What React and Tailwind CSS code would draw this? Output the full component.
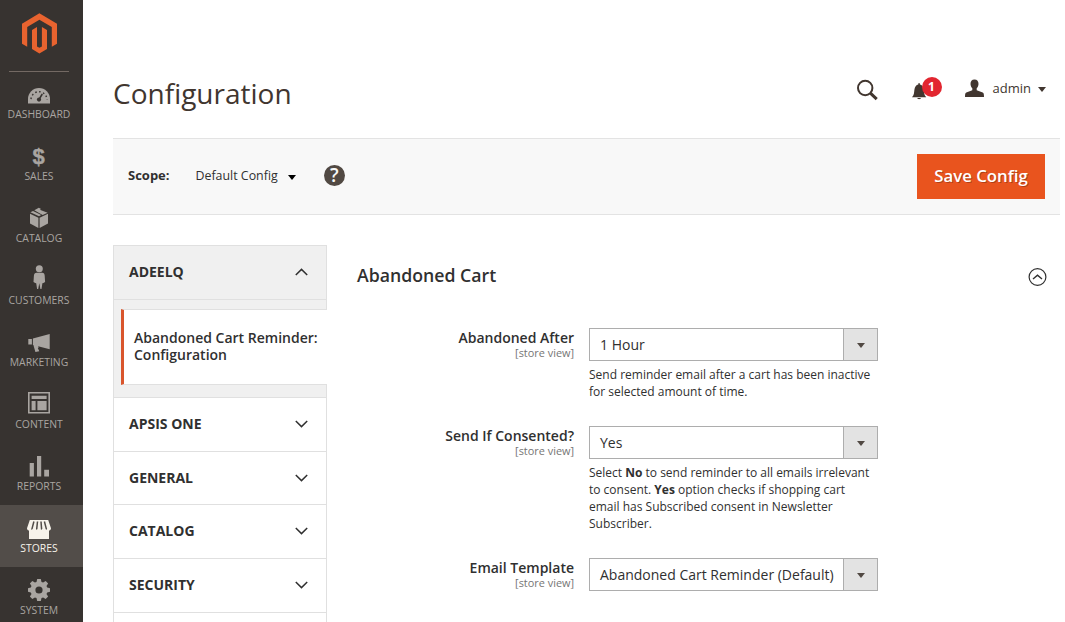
import React from "react";

const icons = {
  dashboard: (
    <>
      <path d="M28 32.6V28a11 11 0 0 1 22 0v4.6z" fill="currentColor" />
      <g stroke="#373330" strokeWidth="1.4" fill="none">
        <path d="M31 28.7a8 8 0 0 1 16 0" strokeDasharray="1.6 2.4" strokeDashoffset="-0.6" />
        <path d="M39 28.5l3.3-5.5" strokeWidth="1.5" />
      </g>
      <circle cx="39" cy="28.6" r="2.1" fill="#373330" />
    </>
  ),
  sales: (
    <text x="38.5" y="30.7" textAnchor="middle" fontSize="22" fontWeight="700" fontFamily="Liberation Sans, sans-serif" fill="currentColor" stroke="currentColor" strokeWidth="0.4">$</text>
  ),
  catalog: (
    <g fill="currentColor">
      <path d="M30 18.8l8.4 4v10.2l-8.4-4.6z" />
      <path d="M48 18.8l-8.4 4v10.2l8.4-4.6z" />
      <path d="M30.4 17.3l2.6-1.4 8.2 4-2.2 1.4z" />
      <path d="M34.3 15.2l4.5-2.4 2.3 1.2-1.3.7 7.8 3-5 2.4z" />
    </g>
  ),
  customers: (
    <g fill="currentColor">
      <circle cx="39.3" cy="11.8" r="3.5" />
      <path d="M36.6 15.8h5.6c1.7 0 2.4 1.2 2.5 3l.4 6.2-1.7 1-1 .2-.9 5.700h-1.100l-1.100-5.700-1.100 5.700h-1.100l-.9-5.700-1-.2-1.700-1 .4-6.200c.1-1.800 1-3 2.700-3z" />
    </g>
  ),
  marketing: (
    <g fill="currentColor">
      <path d="M28.3 20h3.6v5.5h-3.6z" />
      <path d="M32.9 19.5L49.7 15v15.2l-11.6-2.9.6 1.1-.9.6 1.5 3.2-3.9.7-2-6.8h-.5z" />
    </g>
  ),
  content: (
    <g fill="currentColor">
      <path fillRule="evenodd" d="M28 11h22v21.6H28zM29.6 12.6v18.4h18.8V12.6z" />
      <path d="M31.6 14.7h15v3.4h-15zM31.6 20h4v9.2h-4zM37.4 20h9.2v9.2h-9.2z" />
    </g>
  ),
  reports: (
    <path fill="currentColor" d="M29.7 20h4.2v13.6h-4.2zM37 13h4.2v20.6H37zM44.2 26.8h4.8v6.8h-4.8z" />
  ),
  stores: (
    <>
      <path fill="currentColor" d="M29.8 15h18.4l2.8 8.2c0 3-4 3-4.6.7-.7 2.3-4.3 2.3-5 0-.6 2.3-4.2 2.3-4.8 0-.6 2.3-4.3 2.3-5 0-.6 2.3-4.6 2.3-4.6-.7z" />
      <path fill="currentColor" d="M29 25h20v9H29z" />
      <path d="M33.9 16.5l-2 7.6M37.5 16.5l-.8 7.6M41 16.5l.6 7.6M44.4 16.5l2 7.6" stroke="#524d49" strokeWidth="1.5" fill="none" />
    </>
  ),
  system: (
    <g transform="translate(39 23)">
      <path
        fill="currentColor"
        fillRule="evenodd"
        d="M-1.8-11h3.6l.7 2.9 1.6.7 2.6-1.6 2.4 2.4-1.6 2.6.7 1.6 2.8.7v3.4l-2.8.7-.7 1.6 1.6 2.6-2.4 2.4-2.6-1.6-1.6.7-.7 2.9h-3.6l-.7-2.9-1.6-.7-2.6 1.6-2.4-2.4 1.6-2.6-.7-1.6-2.8-.7v-3.4l2.8-.7.7-1.6-1.6-2.6 2.4-2.4 2.6 1.6 1.6-.7zM0-3.6a3.6 3.6 0 1 0 0 7.2 3.6 3.6 0 0 0 0-7.2z"
      />
    </g>
  ),
};

const menu = ["dashboard", "sales", "catalog", "customers", "marketing", "content", "reports", "stores", "system"];

function MenuItem({ name }) {
  const active = name === "stores";
  return (
    <li className={`h-[62px] w-[83px] ${active ? "bg-[#524d49] text-[#f7f3eb]" : "text-[#a9a5a1]"}`}>
      <svg className="block h-[36px] w-[83px]" viewBox="0 0 83 36">{icons[name]}</svg>
      <span className={`block w-[78px] text-center text-[10.4px] leading-[14px] uppercase ${active ? "font-medium" : ""}`}>{name}</span>
    </li>
  );
}

function Caret({ className }) {
  return (
    <svg className={className} viewBox="0 0 8 5">
      <path d="M0 0h8L4 5z" fill="currentColor" />
    </svg>
  );
}

function Chevron({ up }) {
  return (
    <svg className="mr-[18px] block h-[8px] w-[13px]" viewBox="0 0 13 8" fill="none" stroke="#303030" strokeWidth="1.5">
      <path d={up ? "M.8 7l5.7-5.6L12.2 7" : "M.8 1l5.7 5.6L12.2 1"} />
    </svg>
  );
}

function Tab({ label, className }) {
  return (
    <div className={`flex items-center justify-between border-b border-[#e0e0e0] pb-px pl-[15px] ${className}`}>
      <span className="pb-px text-[14px] font-bold">{label}</span>
      <Chevron />
    </div>
  );
}

function Field({ label, value, className, children }) {
  return (
    <div className={`flex ${className}`}>
      <div className="w-[217px] text-right">
        <div className="text-[14px] leading-[19px] font-semibold">{label}</div>
        <div className="text-[10.9px] leading-[11px] text-[#757575]">[store view]</div>
      </div>
      <div className="ml-[15px] w-[289px]">
        <div className="flex h-[33px] border border-[#adadad]">
          <div className="flex flex-1 items-center pl-[10px] text-[14px] whitespace-nowrap">{value}</div>
          <div className="flex w-[34px] items-center justify-center border-l border-[#adadad] bg-[#e3e3e3] pt-px text-[#514943]">
            <Caret className="h-[5px] w-[8px]" />
          </div>
        </div>
        <p className="mt-[5px] text-[12px] leading-[17px] whitespace-nowrap">{children}</p>
      </div>
    </div>
  );
}

export default function App() {
  return (
    <div className="flex h-[622px] w-[1065px] overflow-hidden bg-white font-['Open_Sans',sans-serif] text-[#303030]">
      <nav className="w-[83px] shrink-0 bg-[#373330]">
        <div className="h-[71px]">
          <svg className="block h-[71px] w-[83px]" viewBox="0 0 83 71" fill="#e8632f">
            <path d="M39.4 13.3L57 23.8v19.9l-5.2 3V26.9l-12.4-7.2L27.2 26.9v19.8l-5.2-3V23.8z" />
            <path d="M32 30l5-2.9v19.3l2.4 1.4 2.5-1.4V27.1L47 30v19l-7.6 4.5L32 49z" />
          </svg>
        </div>
        <div className="relative">
          <div className="absolute top-0 left-[9px] h-px w-[60px] bg-[#736963]" />
          <ul>{menu.map((m) => <MenuItem key={m} name={m} />)}</ul>
        </div>
      </nav>

      <div className="ml-[30px] w-[947px] shrink-0">
        <header className="flex h-[138px] justify-between">
          <h1 className="pt-[73px] text-[28px] leading-[40px] text-[#41362f]">Configuration</h1>
          <div className="flex pt-[75px] pr-[14px] text-[#41362f]">
            <svg className="h-[28px] w-[26px]" viewBox="0 0 26 28" fill="none" stroke="currentColor">
              <circle cx="11.2" cy="13" r="7.2" strokeWidth="2" />
              <path d="M16.4 18.2l6.3 6" strokeWidth="3" />
            </svg>
            <div className="relative ml-[31px] h-[28px] w-[34px]">
              <svg className="h-[28px] w-[34px]" viewBox="0 0 34 28" fill="currentColor">
                <path d="M1 22.2c2.3-2.2 2-4.6 2.4-7.4.4-3 1.7-4.7 3.9-5.2V8.2h1.6v1.4c2.2.5 3.5 2.2 3.9 5.2.4 2.8.1 5.2 2.4 7.4z" />
                <path d="M6.3 23h3.6c-.3 1.6-3.3 1.6-3.6 0z" />
              </svg>
              <span className="absolute top-[2px] left-[11px] flex h-[20px] w-[20px] items-center justify-center rounded-full bg-[#e22630] text-[12px] font-bold text-white">1</span>
            </div>
            <svg className="ml-[18px] h-[28px] w-[22px]" viewBox="0 0 22 28" fill="currentColor">
              <path d="M11.5 4.6c2.7 0 4.1 1.9 4 4.4-.1 1.8-.8 3.3-1.8 4.3v1.9l6 2.3c1 .5 1.3 1.6 1.3 4.5H2c0-2.900.3-4 1.300-4.500l6-2.300v-1.900c-1-1-1.700-2.500-1.800-4.300-.1-2.500 1.300-4.400 4-4.400z" />
            </svg>
            <span className="ml-[8px] pt-[4px] text-[13px] leading-[19px]">admin</span>
            <Caret className="mt-[12px] ml-[7px] h-[5px] w-[8px]" />
          </div>
        </header>

        <div className="flex h-[77px] items-center border-y border-[#e3e3e3] bg-[#f8f8f8] pr-[15px] pl-[15px]">
          <span className="w-[67.5px] pb-px text-[13px] font-bold">Scope:</span>
          <span className="pb-px text-[12.4px]">Default Config</span>
          <Caret className="mt-[2px] ml-[10px] h-[5px] w-[8px] text-black" />
          <span className="mb-[2px] ml-[28px] flex h-[21px] w-[21px] items-center justify-center rounded-full bg-[#514943] text-[#f8f8f8]">
            <span className="text-[19px] leading-[21px] font-semibold">?</span>
          </span>
          <button className="ml-auto h-[45px] w-[128px] bg-[#e9541e] pb-[2px] text-[16.8px] font-semibold text-white [text-shadow:1px_1px_0_rgba(0,0,0,0.25)]">Save Config</button>
        </div>

        <div className="flex pt-[30px]">
          <aside className="w-[214px] shrink-0">
            <div className="flex h-[55px] items-center justify-between border border-[#e0e0e0] bg-[#f0f0f0] pb-px pl-[15px]">
              <span className="pb-px text-[14px] font-bold">ADEELQ</span>
              <Chevron up />
            </div>
            <div className="h-[9px] border-x border-[#e0e0e0] bg-[#f0f0f0]" />
            <div className="flex h-[76px] border-l border-[#e0e0e0] bg-[#f0f0f0] pl-[7px]">
              <div className="flex flex-1 items-center border-y border-l-3 border-y-[#e0e0e0] border-l-[#d9552c] bg-white pb-[2px] pl-[10px] text-[14px] leading-[17px] font-semibold whitespace-nowrap">
                <span>Abandoned Cart Reminder:<br />Configuration</span>
              </div>
            </div>
            <div className="h-[13px] border-x border-b border-[#e0e0e0] bg-[#f0f0f0]" />
            <div className="border-x border-[#e0e0e0]">
              <Tab label="APSIS ONE" className="h-[54px]" />
              <Tab label="GENERAL" className="h-[53px]" />
              <Tab label="CATALOG" className="h-[54px]" />
              <Tab label="SECURITY" className="h-[54px]" />
              <div className="h-[40px]" />
            </div>
          </aside>

          <main className="ml-[30px] flex-1">
            <div className="flex h-[83px] justify-between pt-[18px] pr-[13px]">
              <h2 className="text-[17.7px] leading-[25px] font-semibold">Abandoned Cart</h2>
              <svg className="mt-[4px] h-[20px] w-[20px]" viewBox="0 0 20 20" fill="none" stroke="#303030" strokeWidth="1.2">
                <circle cx="10.5" cy="10" r="8.4" />
                <path d="M6 12l4.5-3.8L15 12" strokeWidth="1.4" />
              </svg>
            </div>
            <Field label="Abandoned After" value="1 Hour" className="h-[98px]">
              Send reminder email after a cart has been inactive<br />for selected amount of time.
            </Field>
            <Field label="Send If Consented?" value="Yes" className="h-[132px]">
              Select <b>No</b> to send reminder to all emails irrelevant<br />to consent. <b>Yes</b> option checks if shopping cart<br />email has Subscribed consent in Newsletter<br />Subscriber.
            </Field>
            <Field label="Email Template" value="Abandoned Cart Reminder (Default)" className="h-[64px]" />
          </main>
        </div>
      </div>
    </div>
  );
}
